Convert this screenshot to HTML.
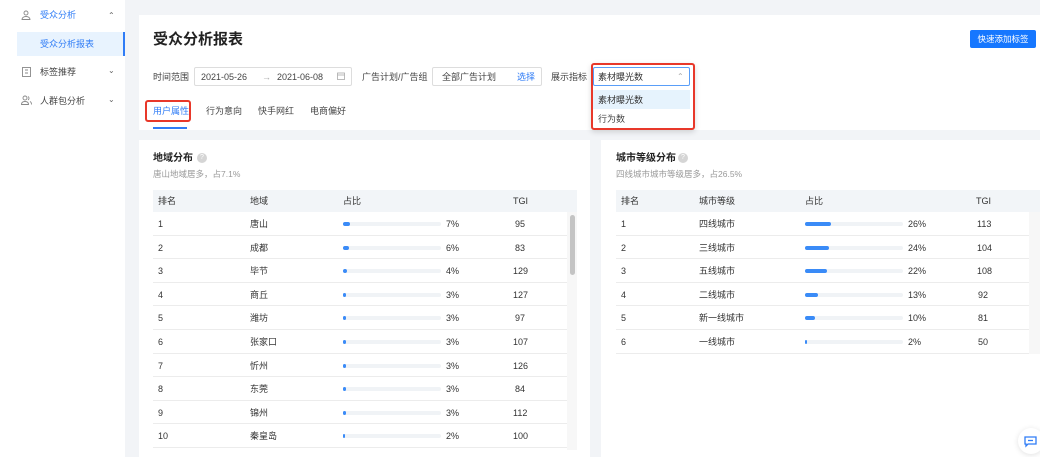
<!DOCTYPE html>
<html><head><meta charset="utf-8">
<style>
*{margin:0;padding:0;box-sizing:border-box}
body{width:1040px;height:457px;overflow:hidden;background:#f2f4f7;font-family:"Liberation Sans","Noto Sans CJK SC",sans-serif;color:#333;font-size:9px;line-height:10px;position:relative}
.a{position:absolute;white-space:nowrap;line-height:10px}
.side{position:absolute;left:0;top:0;width:125px;height:457px;background:#fff}
.card{position:absolute;background:#fff}
.th{position:absolute;height:22px;background:#f2f5f8}
.row{position:absolute;height:23.6px;border-bottom:1px solid #ececec}
.bar{position:absolute;height:4px;background:#f0f3f6;border-radius:2px}
.bar i{position:absolute;left:0;top:0;height:4px;background:#3a8bf7;border-radius:2px}
.gray{color:#999}
.q{position:absolute;width:10px;height:10px;border-radius:50%;background:#d5d5d5;color:#fff;font-size:7px;text-align:center;line-height:10px}
</style></head><body>
<div class="side">
 <svg class="a" style="left:21px;top:10px" width="10" height="10" viewBox="0 0 10 10" fill="none" stroke="#888" stroke-width="0.9"><circle cx="5" cy="3" r="2"/><path d="M1 9.5c0-2 2-3 4-3s4 1 4 3z"/></svg>
 <div class="a" style="left:40px;top:10px;color:#2f7cf6;font-size:9px">受众分析</div>
 <div class="a" style="left:108px;top:11px;color:#666;font-size:8px">⌃</div>
 <div class="a" style="left:17px;top:32px;width:108px;height:24px;background:#e8f3fe;border-right:2px solid #2f7cf6"></div>
 <div class="a" style="left:40px;top:39px;color:#2f7cf6;font-size:9px">受众分析报表</div>
 <svg class="a" style="left:22px;top:67px" width="9" height="10" viewBox="0 0 9 10" fill="none" stroke="#888" stroke-width="0.9"><rect x="0.5" y="0.5" width="8" height="9"/><path d="M3 3h3M3 6h3"/></svg>
 <div class="a" style="left:40px;top:67px;color:#444">标签推荐</div>
 <div class="a" style="left:108px;top:66px;color:#666;font-size:8px">⌄</div>
 <svg class="a" style="left:21px;top:95px" width="11" height="10" viewBox="0 0 11 10" fill="none" stroke="#888" stroke-width="0.9"><circle cx="4" cy="3" r="2"/><path d="M0.5 9.5c0-2 1.5-3 3.5-3s3.5 1 3.5 3z"/><path d="M7 1.5a2 2 0 0 1 0 3.5M9 6.5c1 .5 1.5 1.5 1.5 3"/></svg>
 <div class="a" style="left:40px;top:96px;color:#444">人群包分析</div>
 <div class="a" style="left:108px;top:95px;color:#666;font-size:8px">⌄</div>
</div>

<div class="card" style="left:139px;top:15px;width:901px;height:115px"></div>
<div class="a" style="left:153px;top:32px;font-size:15px;line-height:16px;font-weight:bold;color:#222">受众分析报表</div>
<div class="a" style="left:970px;top:30px;width:66px;height:18px;background:#1677ff;border-radius:2px;color:#fff;font-size:8.5px;line-height:18px;text-align:center">快速添加标签</div>
<div class="a" style="left:153px;top:72px;color:#444">时间范围</div>
<div class="a" style="left:194px;top:67px;width:158px;height:19px;border:1px solid #ddd;border-radius:2px"></div>
<div class="a" style="left:201px;top:72px;color:#444">2021-05-26</div>
<div class="a" style="left:262px;top:72px;color:#aaa">→</div>
<div class="a" style="left:277px;top:72px;color:#444">2021-06-08</div>
<svg class="a" style="left:337px;top:72px" width="8" height="8" viewBox="0 0 8 8" fill="none" stroke="#aaa" stroke-width="0.8"><rect x="0.5" y="1" width="7" height="6.5"/><path d="M0.5 3h7"/></svg>
<div class="a" style="left:362px;top:72px;color:#444">广告计划/广告组</div>
<div class="a" style="left:432px;top:67px;width:110px;height:19px;border:1px solid #ddd;border-radius:2px"></div>
<div class="a" style="left:442px;top:72px;color:#444">全部广告计划</div>
<div class="a" style="left:517px;top:72px;color:#2f7cf6">选择</div>
<div class="a" style="left:551px;top:72px;color:#444">展示指标</div>
<div class="a" style="left:591px;top:63px;width:104px;height:67px;border:2px solid #e8382a;border-radius:3px;background:#fff;box-shadow:0 2px 6px rgba(0,0,0,.15)"></div>
<div class="a" style="left:593px;top:67px;width:97px;height:19px;border:1px solid #5a9ef8;border-radius:2px"></div>
<div class="a" style="left:598px;top:72px;color:#333">素材曝光数</div>
<div class="a" style="left:677px;top:72px;color:#aaa;font-size:8px">⌃</div>
<div class="a" style="left:593px;top:90px;width:97px;height:19px;background:#e6f3fd"></div>
<div class="a" style="left:598px;top:95px;color:#333">素材曝光数</div>
<div class="a" style="left:598px;top:114px;color:#444">行为数</div>

<div class="a" style="left:145px;top:100px;width:46px;height:22px;border:2px solid #e8382a;border-radius:3px"></div>
<div class="a" style="left:153px;top:106px;color:#2f7cf6">用户属性</div>
<div class="a" style="left:153px;top:127px;width:34px;height:2px;background:#2f7cf6"></div>
<div class="a" style="left:206px;top:106px;color:#444">行为意向</div>
<div class="a" style="left:258px;top:106px;color:#444">快手网红</div>
<div class="a" style="left:310px;top:106px;color:#444">电商偏好</div>

<!-- left card -->
<div class="card" style="left:139px;top:140px;width:451px;height:317px"></div>
<div class="a" style="left:153px;top:153px;font-size:10px;line-height:11px;font-weight:bold;color:#222">地域分布</div>
<div class="q" style="left:197px;top:153px">?</div>
<div class="a gray" style="left:153px;top:169px;font-size:8.5px">唐山地域居多，占7.1%</div>
<div class="th" style="left:153px;top:190px;width:424px"></div>
<div class="a" style="left:158px;top:196px">排名</div><div class="a" style="left:250px;top:196px">地域</div><div class="a" style="left:343px;top:196px">占比</div><div class="a" style="left:513px;top:196px">TGI</div>
<div class="a" style="left:567px;top:212px;width:10px;height:238px;background:#f7f7f7"></div>
<div class="a" style="left:570px;top:215px;width:5px;height:60px;background:#c4c4c4;border-radius:3px"></div>

<div class="a" style="left:153px;top:212px">
<div class="row" style="left:0;top:0;width:414px"></div><div class="a" style="left:5px;top:7px">1</div><div class="a" style="left:97px;top:7px">唐山</div><div class="bar" style="left:190px;top:10px;width:98px"><i style="width:7px"></i></div><div class="a" style="left:293px;top:7px">7%</div><div class="a" style="left:362px;top:7px">95</div>
<div class="row" style="left:0;top:23.6px;width:414px"></div><div class="a" style="left:5px;top:30.6px">2</div><div class="a" style="left:97px;top:30.6px">成都</div><div class="bar" style="left:190px;top:33.6px;width:98px"><i style="width:6px"></i></div><div class="a" style="left:293px;top:30.6px">6%</div><div class="a" style="left:362px;top:30.6px">83</div>
<div class="row" style="left:0;top:47.2px;width:414px"></div><div class="a" style="left:5px;top:54.2px">3</div><div class="a" style="left:97px;top:54.2px">毕节</div><div class="bar" style="left:190px;top:57.2px;width:98px"><i style="width:4px"></i></div><div class="a" style="left:293px;top:54.2px">4%</div><div class="a" style="left:360px;top:54.2px">129</div>
<div class="row" style="left:0;top:70.8px;width:414px"></div><div class="a" style="left:5px;top:77.8px">4</div><div class="a" style="left:97px;top:77.8px">商丘</div><div class="bar" style="left:190px;top:80.8px;width:98px"><i style="width:3px"></i></div><div class="a" style="left:293px;top:77.8px">3%</div><div class="a" style="left:360px;top:77.8px">127</div>
<div class="row" style="left:0;top:94.4px;width:414px"></div><div class="a" style="left:5px;top:101.4px">5</div><div class="a" style="left:97px;top:101.4px">潍坊</div><div class="bar" style="left:190px;top:104.4px;width:98px"><i style="width:3px"></i></div><div class="a" style="left:293px;top:101.4px">3%</div><div class="a" style="left:362px;top:101.4px">97</div>
<div class="row" style="left:0;top:118px;width:414px"></div><div class="a" style="left:5px;top:125px">6</div><div class="a" style="left:97px;top:125px">张家口</div><div class="bar" style="left:190px;top:128px;width:98px"><i style="width:3px"></i></div><div class="a" style="left:293px;top:125px">3%</div><div class="a" style="left:360px;top:125px">107</div>
<div class="row" style="left:0;top:141.6px;width:414px"></div><div class="a" style="left:5px;top:148.6px">7</div><div class="a" style="left:97px;top:148.6px">忻州</div><div class="bar" style="left:190px;top:151.6px;width:98px"><i style="width:3px"></i></div><div class="a" style="left:293px;top:148.6px">3%</div><div class="a" style="left:360px;top:148.6px">126</div>
<div class="row" style="left:0;top:165.2px;width:414px"></div><div class="a" style="left:5px;top:172.2px">8</div><div class="a" style="left:97px;top:172.2px">东莞</div><div class="bar" style="left:190px;top:175.2px;width:98px"><i style="width:3px"></i></div><div class="a" style="left:293px;top:172.2px">3%</div><div class="a" style="left:362px;top:172.2px">84</div>
<div class="row" style="left:0;top:188.8px;width:414px"></div><div class="a" style="left:5px;top:195.8px">9</div><div class="a" style="left:97px;top:195.8px">锦州</div><div class="bar" style="left:190px;top:198.8px;width:98px"><i style="width:3px"></i></div><div class="a" style="left:293px;top:195.8px">3%</div><div class="a" style="left:360px;top:195.8px">112</div>
<div class="row" style="left:0;top:212.4px;width:414px"></div><div class="a" style="left:5px;top:219.4px">10</div><div class="a" style="left:97px;top:219.4px">秦皇岛</div><div class="bar" style="left:190px;top:222.4px;width:98px"><i style="width:2px"></i></div><div class="a" style="left:293px;top:219.4px">2%</div><div class="a" style="left:360px;top:219.4px">100</div>
</div>

<!-- right card -->
<div class="card" style="left:601px;top:140px;width:439px;height:317px"></div>
<div class="a" style="left:616px;top:153px;font-size:10px;line-height:11px;font-weight:bold;color:#222">城市等级分布</div>
<div class="q" style="left:678px;top:153px">?</div>
<div class="a gray" style="left:616px;top:169px;font-size:8.5px">四线城市城市等级居多，占26.5%</div>
<div class="th" style="left:616px;top:190px;width:424px"></div>
<div class="a" style="left:621px;top:196px">排名</div><div class="a" style="left:699px;top:196px">城市等级</div><div class="a" style="left:805px;top:196px">占比</div><div class="a" style="left:976px;top:196px">TGI</div>
<div class="a" style="left:1029px;top:212px;width:11px;height:142px;background:#f7f7f7"></div>
<div class="a" style="left:616px;top:212px">
<div class="row" style="left:0;top:0;width:413px"></div><div class="a" style="left:5px;top:7px">1</div><div class="a" style="left:83px;top:7px">四线城市</div><div class="bar" style="left:189px;top:10px;width:98px"><i style="width:26px"></i></div><div class="a" style="left:292px;top:7px">26%</div><div class="a" style="left:361px;top:7px">113</div>
<div class="row" style="left:0;top:23.6px;width:413px"></div><div class="a" style="left:5px;top:30.6px">2</div><div class="a" style="left:83px;top:30.6px">三线城市</div><div class="bar" style="left:189px;top:33.6px;width:98px"><i style="width:24px"></i></div><div class="a" style="left:292px;top:30.6px">24%</div><div class="a" style="left:361px;top:30.6px">104</div>
<div class="row" style="left:0;top:47.2px;width:413px"></div><div class="a" style="left:5px;top:54.2px">3</div><div class="a" style="left:83px;top:54.2px">五线城市</div><div class="bar" style="left:189px;top:57.2px;width:98px"><i style="width:22px"></i></div><div class="a" style="left:292px;top:54.2px">22%</div><div class="a" style="left:361px;top:54.2px">108</div>
<div class="row" style="left:0;top:70.8px;width:413px"></div><div class="a" style="left:5px;top:77.8px">4</div><div class="a" style="left:83px;top:77.8px">二线城市</div><div class="bar" style="left:189px;top:80.8px;width:98px"><i style="width:13px"></i></div><div class="a" style="left:292px;top:77.8px">13%</div><div class="a" style="left:362px;top:77.8px">92</div>
<div class="row" style="left:0;top:94.4px;width:413px"></div><div class="a" style="left:5px;top:101.4px">5</div><div class="a" style="left:83px;top:101.4px">新一线城市</div><div class="bar" style="left:189px;top:104.4px;width:98px"><i style="width:10px"></i></div><div class="a" style="left:292px;top:101.4px">10%</div><div class="a" style="left:362px;top:101.4px">81</div>
<div class="row" style="left:0;top:118px;width:413px"></div><div class="a" style="left:5px;top:125px">6</div><div class="a" style="left:83px;top:125px">一线城市</div><div class="bar" style="left:189px;top:128px;width:98px"><i style="width:2px"></i></div><div class="a" style="left:292px;top:125px">2%</div><div class="a" style="left:362px;top:125px">50</div>
</div>

<div class="a" style="left:1018px;top:428px;width:26px;height:26px;border-radius:50%;background:#fff;box-shadow:0 1px 6px rgba(0,0,0,.12)"></div>
<svg class="a" style="left:1024px;top:436px" width="13" height="12" viewBox="0 0 13 12" fill="none" stroke="#2f7cf6" stroke-width="1.3"><path d="M1 1h11v7H4l-2 2V8H1z"/><path d="M4 4.5h5"/></svg>
</body></html>
